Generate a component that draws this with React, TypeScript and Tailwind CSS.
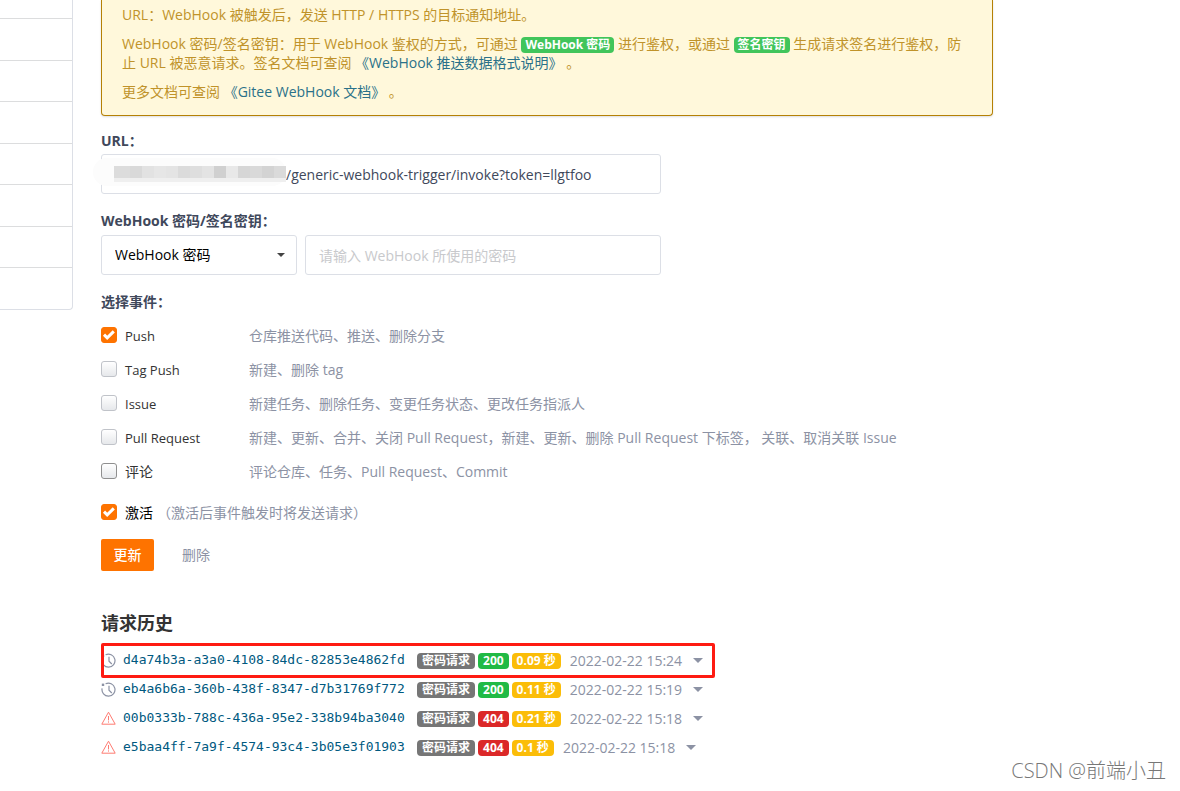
import { useState } from 'react';
import clsx from 'clsx';

const hookEvents = [
    { id: 'push', name: 'Push', desc: '仓库推送代码、推送、删除分支' },
    { id: 'tag', name: 'Tag Push', desc: '新建、删除 tag' },
    { id: 'issue', name: 'Issue', desc: '新建任务、删除任务、变更任务状态、更改任务指派人' },
    { id: 'pr', name: 'Pull Request', desc: '新建、更新、合并、关闭 Pull Request，新建、更新、删除 Pull Request 下标签， 关联、取消关联 Issue' },
    { id: 'comment', name: '评论', desc: '评论仓库、任务、Pull Request、Commit' },
];

const history = [
    { id: 'd4a74b3a-a3a0-4108-84dc-82853e4862fd', status: 200, cost: '0.09 秒', time: '2022-02-22 15:24' },
    { id: 'eb4a6b6a-360b-438f-8347-d7b31769f772', status: 200, cost: '0.11 秒', time: '2022-02-22 15:19' },
    { id: '00b0333b-788c-436a-95e2-338b94ba3040', status: 404, cost: '0.21 秒', time: '2022-02-22 15:18' },
    { id: 'e5baa4ff-7a9f-4574-93c4-3b05e3f01903', status: 404, cost: '0.1 秒', time: '2022-02-22 15:18' },
];

// colours of the blocks that mask the host part of the url
const mosaic = ['#dcdcdc', '#d9d9d9', '#e2e2e2', '#e6e6e6', '#e4e4e4', '#dbdbdb', '#dedede', '#e3e3e3', '#d0d0d0', '#e8e8e8', '#d6d6d6', '#d9d9d9', '#d3d3d3', '#dadada'];

const Caret = () => (
    <svg width="10" height="5" viewBox="0 0 10 5" fill="currentColor" aria-hidden="true">
        <path d="M0 0h10L5 5z" />
    </svg>
);

const HistoryIcon = () => (
    <svg className="text-[#8c92a4]" width="15" height="15" viewBox="0 0 15 15" fill="none" stroke="currentColor" strokeWidth="1.2" aria-hidden="true">
        <path d="M4.6 1.8A6.5 6.5 0 1 1 1.1 6.4" />
        <path d="M8 3.8v4.4l2.8 2.8" />
        <path d="M.8 1.6h2.4V4H.8z" fill="currentColor" stroke="none" />
    </svg>
);

const WarnIcon = () => (
    <svg className="text-[#fe7b72]" width="15" height="15" viewBox="0 0 15 15" fill="none" stroke="currentColor" aria-hidden="true">
        <path d="M7.5 1.2L14.2 13.2H.8z" strokeLinejoin="round" />
        <path d="M7.5 5v4.4M7.5 10.4v1.2" />
    </svg>
);

type CheckProps = { id: string; checked: boolean; dark?: boolean; onChange: () => void };

const Check = ({ id, checked, dark, onChange }: CheckProps) => (
    <span className="relative mb-0.5 flex size-4 shrink-0">
        <input
            id={id}
            type="checkbox"
            checked={checked}
            onChange={onChange}
            className={clsx(
                'size-4 appearance-none rounded-[3px] border bg-linear-to-b from-white to-[#e6e8eb] checked:border-[#fe7300] checked:bg-[#fe7300] checked:bg-none',
                dark ? 'border-[#8f8f8f]' : 'border-[#c0c3c9]'
            )}
        />
        {checked && (
            <svg className="pointer-events-none absolute inset-0" width="16" height="16" viewBox="0 0 16 16" fill="none" stroke="#fff" strokeWidth="3" aria-hidden="true">
                <path d="M3 7.6l3.2 3.2L12.8 4.4" />
            </svg>
        )}
    </span>
);

const badge = 'rounded text-xs leading-4 font-bold text-white';

const App = () => {
    const [url, setUrl] = useState('/generic-webhook-trigger/invoke?token=llgtfoo');
    const [selected, setSelected] = useState(['push']);
    const [active, setActive] = useState(true);

    const toggle = (id: string) => {
        setSelected(selected.includes(id) ? selected.filter((s) => s !== id) : [...selected, id]);
    };

    return (
        <div className="relative flex min-h-screen items-start bg-white font-['Open_Sans','Noto_Sans_CJK_SC',sans-serif] text-sm text-[#40485b]">
            <ul className="flex h-[310px] w-[73px] shrink-0 flex-col rounded-br border-r border-b border-[#dcdfe6]">
                <li className="h-[19px] border-b border-[#dcddde]" />
                {[1, 2, 3, 4, 5, 6].map((n) => (
                    <li key={n} className="flex-1 border-b border-[#dcddde]" />
                ))}
                <li className="flex-1" />
            </ul>

            <main className="mr-6 ml-7 max-w-[892px] min-w-0 flex-1 pb-8">
                <div className="space-y-[10px] rounded-b border border-t-0 border-[#b58105] bg-[#fff8db] px-5 pt-[5px] pb-[14px] leading-[19px] text-[#c0932a] shadow-[0_1px_2px_rgba(34,36,38,0.15)]">
                    <p>URL：WebHook 被触发后，发送 HTTP / HTTPS 的目标通知地址。</p>
                    <p>
                        WebHook 密码/签名密钥：用于 WebHook 鉴权的方式，可通过 <span className={clsx(badge, 'inline-block bg-[#41c55b] px-1')}>WebHook 密码</span> 进行鉴权，或通过 <span className={clsx(badge, 'inline-block bg-[#41c55b] px-1')}>签名密钥</span> 生成请求签名进行鉴权，防止 URL 被恶意请求。签名文档可查阅 <a href="#format" className="text-[#2a7189]">《WebHook 推送数据格式说明》</a> 。
                    </p>
                    <p>
                        更多文档可查阅 <a href="#docs" className="text-[#2a7189]">《Gitee WebHook 文档》</a> 。
                    </p>
                </div>

                <form onSubmit={(e) => e.preventDefault()}>
                    <div className="mt-[15px] max-w-[560px]">
                        <label htmlFor="url" className="block leading-5 font-bold">URL：</label>
                        <div className="relative mt-[3px]">
                            <input
                                id="url"
                                value={url}
                                onChange={(e) => setUrl(e.target.value)}
                                className="h-10 w-full rounded-[3px] border border-[#dcdfe6] pr-3 pl-[184px] text-[#40485b]"
                            />
                            <div className="pointer-events-none absolute top-1 -left-2 h-7 w-[193px] rounded-[14px] bg-[#fcfcfc]" />
                            <div className="pointer-events-none absolute top-3 left-[13px] flex">
                                {mosaic.map((color, i) => (
                                    <span key={i} className="h-4 w-3 border-b-4 border-[#efefef] first:w-4" style={{ backgroundColor: color }} />
                                ))}
                            </div>
                        </div>
                    </div>

                    <div className="mt-[17px] max-w-[560px]">
                        <label htmlFor="secret" className="block leading-5 font-bold">WebHook 密码/签名密钥：</label>
                        <div className="mt-1 flex gap-2">
                            <div className="relative w-[196px] shrink-0">
                                <select aria-label="鉴权方式" className="h-10 w-full appearance-none rounded-[3px] border border-[#dcdfe6] bg-white px-[13px] text-black">
                                    <option>WebHook 密码</option>
                                    <option>签名密钥</option>
                                </select>
                                <span className="pointer-events-none absolute inset-y-0 right-3 flex items-center text-[#444]">
                                    <svg width="8" height="4" viewBox="0 0 8 4" fill="currentColor" aria-hidden="true">
                                        <path d="M0 0h8L4 4z" />
                                    </svg>
                                </span>
                            </div>
                            <input
                                id="secret"
                                placeholder="请输入 WebHook 所使用的密码"
                                className="h-10 min-w-0 flex-1 rounded-[3px] border border-[#dcdfe6] px-[13px] placeholder:text-[#c8c9cc]"
                            />
                        </div>
                    </div>

                    <fieldset className="mt-[17px]">
                        <legend className="leading-5 font-bold">选择事件：</legend>
                        <div className="mt-[7px]">
                            {hookEvents.map((e) => (
                                <div key={e.id} className="flex h-[34px] items-center">
                                    <Check id={e.id} checked={selected.includes(e.id)} dark={e.id === 'comment'} onChange={() => toggle(e.id)} />
                                    <label htmlFor={e.id} className={clsx('ml-2 w-[124px] shrink-0 text-[#333]', e.id !== 'comment' && 'text-[13px]')}>{e.name}</label>
                                    <span className="text-[#8c92a4]">{e.desc}</span>
                                </div>
                            ))}
                        </div>
                    </fieldset>

                    <div className="mt-[7px] flex h-[34px] items-center">
                        <Check id="active" checked={active} onChange={() => setActive(!active)} />
                        <label htmlFor="active" className="ml-2 text-black">激活</label>
                        <span className="ml-1 text-[#8c92a4]">（激活后事件触发时将发送请求）</span>
                    </div>

                    <div className="mt-[9px] flex items-center gap-4">
                        <button type="submit" className="h-8 w-[53px] rounded-[2px] bg-[#fe7300] font-medium text-white">更新</button>
                        <button type="button" className="h-8 px-3 text-[#8c92a4]">删除</button>
                    </div>
                </form>

                <h3 className="mt-[38px] text-lg leading-7 font-bold text-[#333]">请求历史</h3>
                <ul className="mt-[9px]">
                    {history.map((h, i) => (
                        <li key={h.id} className="relative flex h-[29px] items-center">
                            {h.status === 200 ? <HistoryIcon /> : <WarnIcon />}
                            <a href={`#${h.id}`} className="ml-[7px] w-[294px] shrink-0 font-['DejaVu_Sans_Mono',monospace] text-[13px] text-[#005980]">{h.id}</a>
                            <span className={clsx(badge, 'bg-[#767676] px-[5px]')}>密码请求</span>
                            <span className={clsx(badge, 'ml-[3px] px-[5px]', h.status === 200 ? 'bg-[#21ba45]' : 'bg-[#db2828]')}>{h.status}</span>
                            <span className={clsx(badge, 'ml-[3px] bg-[#fbbd08] px-[5px]')}>{h.cost}</span>
                            <time className="ml-[9px] text-[#8c92a4]">{h.time}</time>
                            <button type="button" aria-label="展开" className="ml-[11px] text-[#8c92a4]">
                                <Caret />
                            </button>
                            {i === 0 && <span className="pointer-events-none absolute -top-[3px] left-0 h-[35px] w-[614px] rounded-[2px] border-3 border-[#fe1b12]" />}
                        </li>
                    ))}
                </ul>
            </main>

            <p className="absolute right-[14px] bottom-2 text-xl leading-[30px] font-light text-[#777]">CSDN @前端小丑</p>
        </div>
    );
};

export default App;
